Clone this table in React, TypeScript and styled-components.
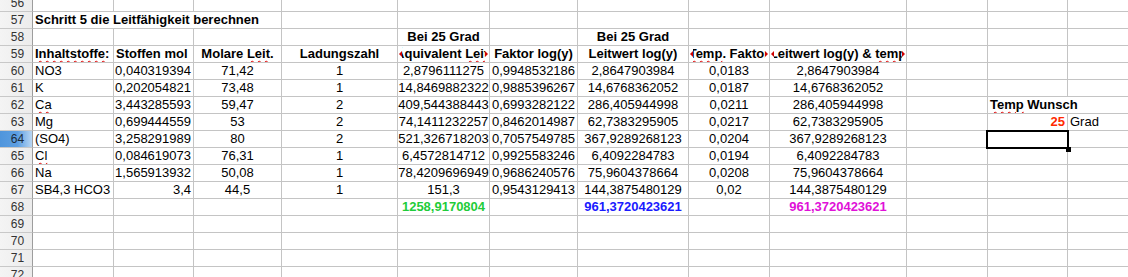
import React from "react";
import styled, { createGlobalStyle } from "styled-components";

type Align = "left" | "center" | "right";

interface CellSpec {
  col: number; // 0 = A ... 11 = L
  text: React.ReactNode;
  align?: Align;
  bold?: boolean;
  color?: string;
  span?: number;
  clip?: boolean;
}

interface RowSpec {
  num: number;
  cells: CellSpec[];
}

const COLUMN_COUNT = 12;

const Spell: React.FC<{ children: React.ReactNode }> = ({ children }) => (
  <SpellMark>{children}</SpellMark>
);

// Zeilen 60-67: Inhaltstoffe mit Werten
const ions: string[][] = [
  ["NO3", "0,040319394", "71,42", "1", "2,8796111275", "0,9948532186", "2,8647903984", "0,0183", "2,8647903984"],
  ["K", "0,202054821", "73,48", "1", "14,8469882322", "0,9885396267", "14,6768362052", "0,0187", "14,6768362052"],
  ["Ca", "3,443285593", "59,47", "2", "409,544388443", "0,6993282122", "286,405944998", "0,0211", "286,405944998"],
  ["Mg", "0,699444559", "53", "2", "74,1411232257", "0,8462014987", "62,7383295905", "0,0217", "62,7383295905"],
  ["(SO4)", "3,258291989", "80", "2", "521,326718203", "0,7057549785", "367,9289268123", "0,0204", "367,9289268123"],
  ["Cl", "0,084619073", "76,31", "1", "6,4572814712", "0,9925583246", "6,4092284783", "0,0194", "6,4092284783"],
  ["Na", "1,565913932", "50,08", "1", "78,4209696949", "0,9686240576", "75,9604378664", "0,0208", "75,9604378664"],
  ["SB4,3 HCO3", "3,4", "44,5", "1", "151,3", "0,9543129413", "144,3875480129", "0,02", "144,3875480129"],
];

const spellNames = ["Ca", "Cl"];

const ionRows: RowSpec[] = ions.map((values, i) => {
  const [name, ...rest] = values;
  const cells: CellSpec[] = [
    {
      col: 0,
      text: spellNames.includes(name) ? <Spell>{name}</Spell> : name,
      align: "left",
    },
    { col: 1, text: rest[0], align: "right" },
    ...rest.slice(1).map((v, j) => ({ col: j + 2, text: v, align: "center" as Align })),
  ];
  return { num: 60 + i, cells };
});

// Zusatzfelder rechts (Temp Wunsch)
ionRows[2].cells.push({ col: 10, text: <><Spell>Temp</Spell> Wunsch</>, bold: true, align: "left", span: 2 });
ionRows[3].cells.push({ col: 10, text: "25", bold: true, align: "right", color: "#ff2a00" });
ionRows[3].cells.push({ col: 11, text: "Grad", align: "left" });

const rows: RowSpec[] = [
  { num: 56, cells: [] },
  {
    num: 57,
    cells: [{ col: 0, text: "Schritt 5 die Leitfähigkeit berechnen", bold: true, align: "left", span: 3 }],
  },
  {
    num: 58,
    cells: [
      { col: 4, text: "Bei 25 Grad", bold: true },
      { col: 6, text: "Bei 25 Grad", bold: true },
    ],
  },
  {
    num: 59,
    cells: [
      { col: 0, text: <><Spell>Inhaltstoffe</Spell>:</>, bold: true, align: "left" },
      { col: 1, text: "Stoffen mol", bold: true, align: "left" },
      { col: 2, text: <>Molare <Spell>Leit</Spell>.</>, bold: true },
      { col: 3, text: "Ladungszahl", bold: true },
      { col: 4, text: <>Äquivalent <Spell>Leit</Spell>.</>, bold: true, clip: true },
      { col: 5, text: "Faktor log(y)", bold: true },
      { col: 6, text: "Leitwert log(y)", bold: true },
      { col: 7, text: <><Spell>Temp</Spell>. Faktor</>, bold: true, clip: true },
      { col: 8, text: <>Leitwert log(y) &amp; <Spell>temp</Spell></>, bold: true, clip: true },
    ],
  },
  ...ionRows,
  {
    num: 68,
    cells: [
      { col: 4, text: "1258,9170804", bold: true, color: "#1fcc3a" },
      { col: 6, text: "961,3720423621", bold: true, color: "#1a1aff" },
      { col: 8, text: "961,3720423621", bold: true, color: "#e010d8" },
    ],
  },
  { num: 69, cells: [] },
  { num: 70, cells: [] },
  { num: 71, cells: [] },
  { num: 72, cells: [] },
];

// markierte Zelle K64
const SELECTED = { row: 64, col: 10 };

const App: React.FC = () => {
  const renderRow = (row: RowSpec) => {
    const out: React.ReactNode[] = [];
    out.push(
      <RowHead key={`h${row.num}`} $active={row.num === SELECTED.row}>
        {row.num}
      </RowHead>
    );
    let col = 0;
    while (col < COLUMN_COUNT) {
      const spec = row.cells.find((c) => c.col === col);
      const key = `${row.num}-${col}`;
      if (row.num === SELECTED.row && col === SELECTED.col) {
        out.push(
          <SelectedCell key={key}>
            <SelectionBox />
            <FillHandle />
          </SelectedCell>
        );
        col += 1;
        continue;
      }
      if (!spec) {
        out.push(<Cell key={key} />);
        col += 1;
        continue;
      }
      const span = spec.span ?? 1;
      out.push(
        <Cell
          key={key}
          $align={spec.align ?? "center"}
          $bold={spec.bold}
          $color={spec.color}
          $span={span}
        >
          {spec.clip ? (
            <>
              <ClipMark $side="left" />
              <ClipWindow>
                <CellText>{spec.text}</CellText>
              </ClipWindow>
              <ClipMark $side="right" />
            </>
          ) : (
            <CellText>{spec.text}</CellText>
          )}
        </Cell>
      );
      col += span;
    }
    return out;
  };

  return (
    <>
      <GlobalStyle />
      <Viewport>
        <Sheet>{rows.map(renderRow)}</Sheet>
      </Viewport>
    </>
  );
};

const GlobalStyle = createGlobalStyle`
  html, body {
    margin: 0;
    padding: 0;
    background: #ffffff;
    overflow: hidden;
  }
  body {
    font-family: "Liberation Sans", Arial, sans-serif;
    color: #000;
  }
`;

const Viewport = styled.div`
  width: 1128px;
  height: 277px;
  overflow: hidden;
`;

const Sheet = styled.div`
  display: grid;
  grid-template-columns: 33px 81px 80px 88px 116px 92px 88px 111px 81px 137px 81px 80px 81px;
  grid-auto-rows: 17px;
  margin-top: -5px;
  width: max-content;
`;

const RowHead = styled.div<{ $active?: boolean }>`
  box-sizing: border-box;
  display: flex;
  align-items: center;
  justify-content: center;
  font-size: 12px;
  color: ${(p) => (p.$active ? "#1b2a3a" : "#333")};
  background: ${(p) =>
    p.$active
      ? "linear-gradient(to right, #4f95dc 0%, #5d9fe2 55%, #b8d6f3 100%)"
      : "linear-gradient(to right, #f4f4f4, #ececec)"};
  border-right: 1px solid #9d9d9d;
  border-bottom: 1px solid #c8c8c8;
  padding-left: 3px;
`;

const Cell = styled.div<{ $align?: Align; $bold?: boolean; $color?: string; $span?: number }>`
  position: relative;
  box-sizing: border-box;
  grid-column: span ${(p) => p.$span ?? 1};
  display: flex;
  align-items: center;
  justify-content: ${(p) =>
    p.$align === "left" ? "flex-start" : p.$align === "right" ? "flex-end" : "center"};
  padding: 0 2px;
  overflow: hidden;
  white-space: nowrap;
  font-size: 13px;
  font-weight: ${(p) => (p.$bold ? 700 : 400)};
  color: ${(p) => p.$color ?? "#000"};
  border-right: 1px solid #c4c4c4;
  border-bottom: 1px solid #c4c4c4;
`;

const ClipWindow = styled.div`
  flex: 1;
  min-width: 0;
  display: flex;
  justify-content: center;
  overflow: hidden;
  margin: 0 2px;
`;

const CellText = styled.span`
  flex-shrink: 0;
  line-height: 16px;
`;

const SpellMark = styled.span`
  text-decoration: underline wavy #e00000;
  text-decoration-thickness: 1px;
  text-underline-offset: 2px;
`;

const ClipMark = styled.span<{ $side: "left" | "right" }>`
  position: absolute;
  top: 50%;
  ${(p) => (p.$side === "left" ? "left: 1px;" : "right: 1px;")}
  margin-top: -3px;
  width: 0;
  height: 0;
  border-top: 3px solid transparent;
  border-bottom: 3px solid transparent;
  ${(p) =>
    p.$side === "left" ? "border-right: 3px solid #d00000;" : "border-left: 3px solid #d00000;"}
  z-index: 1;
`;

const SelectedCell = styled.div`
  position: relative;
  box-sizing: border-box;
  border-right: 1px solid #c4c4c4;
  border-bottom: 1px solid #c4c4c4;
`;

const SelectionBox = styled.div`
  position: absolute;
  top: -1px;
  left: -2px;
  right: -2px;
  bottom: -2px;
  border: 2px solid #000;
  z-index: 2;
`;

const FillHandle = styled.div`
  position: absolute;
  right: -4px;
  bottom: -5px;
  width: 5px;
  height: 5px;
  background: #000;
  z-index: 3;
`;

export default App;
